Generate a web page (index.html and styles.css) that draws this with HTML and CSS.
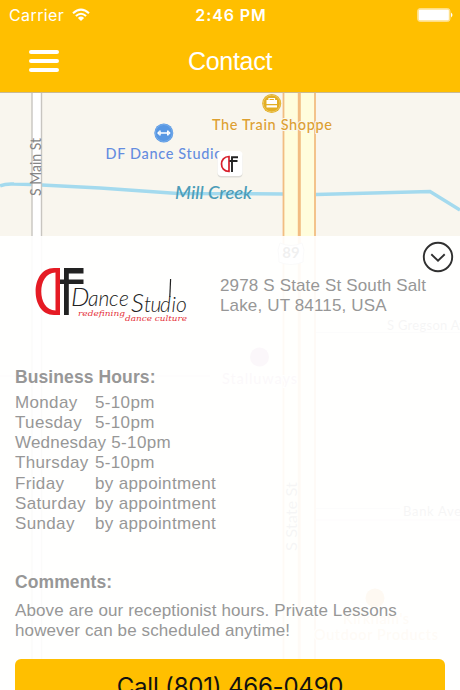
FILE: index.html
```
<!DOCTYPE html>
<html lang="en">
<head>
    <meta charset="UTF-8">
    <meta name="viewport" content="width=device-width, initial-scale=1.0">
    <title>Contact</title>
    <link rel="stylesheet" href="styles.css">
</head>
<body>
    <div class="screen">
        <header class="header">
            <div class="status-bar">
                <div class="carrier">
                    <span>Carrier</span>
                    <svg width="18" height="14" viewBox="0 0 18 14" fill="none" stroke="#fff" stroke-width="2.1">
                        <path d="M1 5.2Q9-1.9 17 5.2"/>
                        <path d="M3.9 8Q9 3.5 14.1 8"/>
                        <path d="M9 13L5.9 9.9Q9 7.2 12.1 9.9Z" fill="#fff" stroke="none"/>
                    </svg>
                </div>
                <span class="time">2:46 PM</span>
                <div class="battery-wrap">
                    <svg width="36" height="14" viewBox="0 0 36 14">
                        <rect x=".6" y=".6" width="32.4" height="12.8" rx="2.5" fill="#ffe08a" stroke="#ffe08a"/>
                        <rect x="1.800" y="1.800" width="30" height="10.400" rx="1" fill="#fff"/>
                        <path d="M34 4.5Q37 7 34 9.5Z" fill="#fff"/>
                    </svg>
                </div>
            </div>
            <div class="nav-bar">
                <button class="menu" aria-label="Menu"><i></i><i></i><i></i></button>
                <h1>Contact</h1>
            </div>
        </header>

        <main class="main">
            <svg class="map" width="460" height="597" viewBox="0 93 460 597">
                <rect y="93" width="460" height="597" fill="#f9f6ee"/>
                <!-- creek -->
                <path d="M0 186Q5 183.500 14 184L32 184.500L100 188L178 193.500L283 194L316 194.500L430 191.500L460 210" fill="none" stroke="#a4daee" stroke-width="3.5"/>
                <!-- side streets -->
                <g fill="none" stroke="#d9d6d0" stroke-width="1">
                    <path d="M315.500 508V332.500H460M315.500 508.500H400M315.500 520H460M0 376H210M315.500 520V650"/>
                </g>
                <!-- main st -->
                <path d="M32 93h10v597h-10z" fill="#fff"/>
                <path d="M32 93V690M41.500 93V690" stroke="#c8c5c0" stroke-width="1.400"/>
                <!-- state st -->
                <path d="M283 93h33v597h-33z" fill="#fffddc"/>
                <path d="M283.500 93V690M315 93V690" stroke="#f2bd82" stroke-width="1.800"/>
                <path d="M299.300 93V690" stroke="#f2bd82" stroke-width="3"/>

                <g class="street">
                    <text transform="translate(40.500 196) rotate(-90)" textLength="58" lengthAdjust="spacingAndGlyphs">S Main St</text>
                    <text transform="translate(297 551) rotate(-90)" textLength="69" lengthAdjust="spacingAndGlyphs">S State St</text>
                    <text class="small" x="387" y="330" textLength="86">S Gregson Ave</text>
                    <text class="small" x="403" y="516" textLength="58">Bank Ave</text>
                </g>
                <text class="creek" x="175" y="198.500" textLength="77" lengthAdjust="spacingAndGlyphs">Mill Creek</text>

                <g class="place">
                    <circle cx="271.700" cy="103.500" r="9.500" fill="#e3ae24"/>
                    <circle cx="271.700" cy="103.500" r="8.400" fill="none" stroke="#edc75e"/>
                    <path d="M269 100V98.500H274.500V100" fill="none" stroke="#fff" stroke-width="1.200"/>
                    <path d="M266.500 100H277V104H266.500ZM266.500 105.300H277V107.500H266.500Z" fill="#fff"/>
                    <text x="212" y="130" fill="#dda032" textLength="120">The Train Shoppe</text>

                    <circle cx="163.800" cy="133" r="9.500" fill="#5797e3"/>
                    <circle cx="163.800" cy="133" r="8.500" fill="none" stroke="#77adeb"/>
                    <path d="M160 133H168M160 130.500V135.500M167.700 130.500V135.500" stroke="#fff" stroke-width="1.400"/>
                    <path d="M159.500 130.500L157 133L159.500 135.500ZM168.200 130.500L170.700 133L168.200 135.500Z" fill="#fff"/>
                    <text x="105.500" y="158.500" fill="#658ddf" textLength="117">DF Dance Studio</text>

                    <circle cx="259.500" cy="357" r="9.500" fill="#c89ab8"/>
                    <text x="222" y="384" fill="#c9a9c0" textLength="75">Stalluways</text>
                    <circle cx="375" cy="598" r="9.500" fill="#ecb456"/>
                    <text x="343" y="624" fill="#ecc488" textLength="66">Kirkham's</text>
                    <text x="314" y="640" fill="#ecc488" textLength="124">Outdoor Products</text>
                </g>

                <!-- route shield -->
                <path d="M280 243Q291 248 302 243L304 250Q303 256 303 262Q291 267 279 262Q279 256 278 250Z" fill="#fff" stroke="#bbb"/>
                <text class="route" x="291" y="258" text-anchor="middle">89</text>

                <!-- studio pin -->
                <rect x="217.500" y="152.500" width="25" height="25" rx="4" fill="#dedcd7"/>
                <rect x="217.500" y="151" width="25" height="25" rx="4" fill="#fff"/>
                <path d="M229 156.500C219 156.500 219 171.500 229 171.500Z" fill="#fff" stroke="#d8202c" stroke-width="1.700"/>
                <path d="M232 172V157.300H238M229.500 161H237.500" fill="none" stroke="#222" stroke-width="1.900"/>
            </svg>

            <section class="panel">
                <button class="toggle" aria-label="Collapse">
                    <svg width="32" height="32" viewBox="0 0 32 32" fill="none" stroke="#303030" stroke-width="1.900">
                        <circle cx="16" cy="16" r="14.200"/>
                        <path d="M9.300 13.300L16 19.800L22.700 13.300"/>
                    </svg>
                </button>

                <div class="intro">
                    <svg class="logo" width="156" height="60" viewBox="33 264 156 60">
                        <path d="M60 268V315H54C29.500 315 29.500 268 54 268ZM55.500 272.500C36.500 272.500 36.500 310.500 55.500 310.500Z" fill="#e51b24" fill-rule="evenodd"/>
                        <path d="M64 268H83.500V273.500H68.800V279.500H83.500V284H68.800V315H64V284H60V279.500H64Z" fill="#222"/>
                        <text class="logo-name" y="306" x="71 88 98.500 109 119"><tspan class="cap">D</tspan>ance</text>
                        <text class="logo-name" y="311.500" x="131 144 150.500 160 171.500 176"><tspan class="cap">S</tspan>tudio</text>
                        <path d="M170.600 279L169.800 297" stroke="#222" stroke-width="1.200"/>
                        <text class="logo-tag" x="78" y="315.500" textLength="47" lengthAdjust="spacingAndGlyphs">redefining</text>
                        <text class="logo-tag" x="125" y="320.500" textLength="62" lengthAdjust="spacingAndGlyphs">dance culture</text>
                    </svg>
                    <p class="address">2978 S State St South Salt<br>Lake, UT 84115, USA</p>
                </div>

                <h2>Business Hours:</h2>
                <dl class="hours">
                    <div><dt>Monday</dt><dd>5-10pm</dd></div>
                    <div><dt>Tuesday</dt><dd>5-10pm</dd></div>
                    <div><dt>Wednesday</dt><dd>5-10pm</dd></div>
                    <div><dt>Thursday</dt><dd>5-10pm</dd></div>
                    <div><dt>Friday</dt><dd>by appointment</dd></div>
                    <div><dt>Saturday</dt><dd>by appointment</dd></div>
                    <div><dt>Sunday</dt><dd>by appointment</dd></div>
                </dl>

                <h2>Comments:</h2>
                <p class="comments">Above are our receptionist hours. Private Lessons<br>however can be scheduled anytime!</p>

                <button class="call">Call (801) 466-0490</button>
            </section>
        </main>
    </div>
</body>
</html>
```
FILE: styles.css
```
* {
    box-sizing: border-box;
}
body {
    margin: 0;
    font-family: "Liberation Sans", Arial, sans-serif;
    color: #979797;
    background: #fff;
}
h1, h2, p, dl, dd {
    margin: 0;
}
button {
    border: none;
    padding: 0;
    background: none;
    cursor: pointer;
}
.screen {
    display: flex;
    flex-direction: column;
    height: 690px;
    overflow: hidden;
}
.header {
    flex: none;
    height: 93px;
    background: #ffbf00;
    border-bottom: 1px solid #c9b994;
    color: #fff;
}
.status-bar {
    display: grid;
    grid-template-columns: 1fr auto 1fr;
    align-items: center;
    height: 30px;
    padding: 0 7px 0 9px;
    font-family: Inter, sans-serif;
    font-size: 16px;
}
.carrier {
    display: flex;
    align-items: center;
    gap: 8px;
    letter-spacing: 0.4px;
}
.time {
    font-weight: 600;
    letter-spacing: 0.9px;
}
.battery-wrap {
    display: flex;
    justify-content: flex-end;
}
.nav-bar {
    display: grid;
    grid-template-columns: 60px 1fr 60px;
    align-items: center;
    height: 62px;
}
.menu {
    display: flex;
    flex-direction: column;
    gap: 5px;
    width: 30px;
    margin-left: 29px;
}
.menu i {
    height: 4px;
    border-radius: 2px;
    background: #fff;
}
h1 {
    font-size: 25px;
    font-weight: normal;
    letter-spacing: -0.3px;
    text-align: center;
}
.main {
    position: relative;
    flex: 1;
    padding-top: 143px;
}
.map {
    position: absolute;
    top: 0;
    left: 0;
}
.street {
    font: 14.5px Lato, sans-serif;
    fill: #858585;
}
.street .small {
    font-size: 13px;
}
.creek {
    font: italic 500 17px Lato, sans-serif;
    fill: #4c9db8;
}
.place {
    font: 500 14.5px Lato, sans-serif;
}
.place text {
    paint-order: stroke;
    stroke: #fbf8f0;
    stroke-width: 2px;
}
.route {
    font: bold 15px Lato, sans-serif;
    fill: #444;
}
.panel {
    position: relative;
    height: 454px;
    padding: 28px 15px 0;
    background: rgba(255, 255, 255, 0.92);
}
.toggle {
    position: absolute;
    top: 5px;
    right: 6px;
    width: 32px;
    height: 32px;
}
.intro {
    display: flex;
    gap: 31px;
    height: 102px;
    padding-left: 18px;
}
.logo {
    flex: none;
}
.logo-name {
    font: italic 300 21px Lato, sans-serif;
    fill: #222;
}
.logo-name .cap {
    font-size: 26px;
}
.logo-tag {
    font: italic 7.5px "DejaVu Serif", serif;
    fill: #e5303a;
}
.address {
    padding-top: 12px;
    font-size: 17px;
    line-height: 19.5px;
    letter-spacing: 0.15px;
    white-space: nowrap;
}
h2 {
    font-size: 17.5px;
    line-height: 22px;
    letter-spacing: 0.1px;
}
.hours {
    margin: 5px 0 37px;
    font-size: 17px;
    line-height: 20.15px;
    letter-spacing: 0.35px;
}
.hours div {
    display: flex;
    gap: 5px;
}
.hours dt {
    min-width: 75px;
}
.hours div:nth-child(3) dt {
    letter-spacing: 0.2px;
}
.comments {
    margin-top: 8px;
    font-size: 17px;
    line-height: 19.5px;
    letter-spacing: 0.12px;
    white-space: nowrap;
}
.call {
    width: 430px;
    height: 52px;
    margin-top: 19px;
    border-radius: 6px;
    background: #ffbf00;
    color: #111;
    font-family: Inter, sans-serif;
    font-size: 24px;
    letter-spacing: -0.2px;
    padding-top: 2px;
}
```
